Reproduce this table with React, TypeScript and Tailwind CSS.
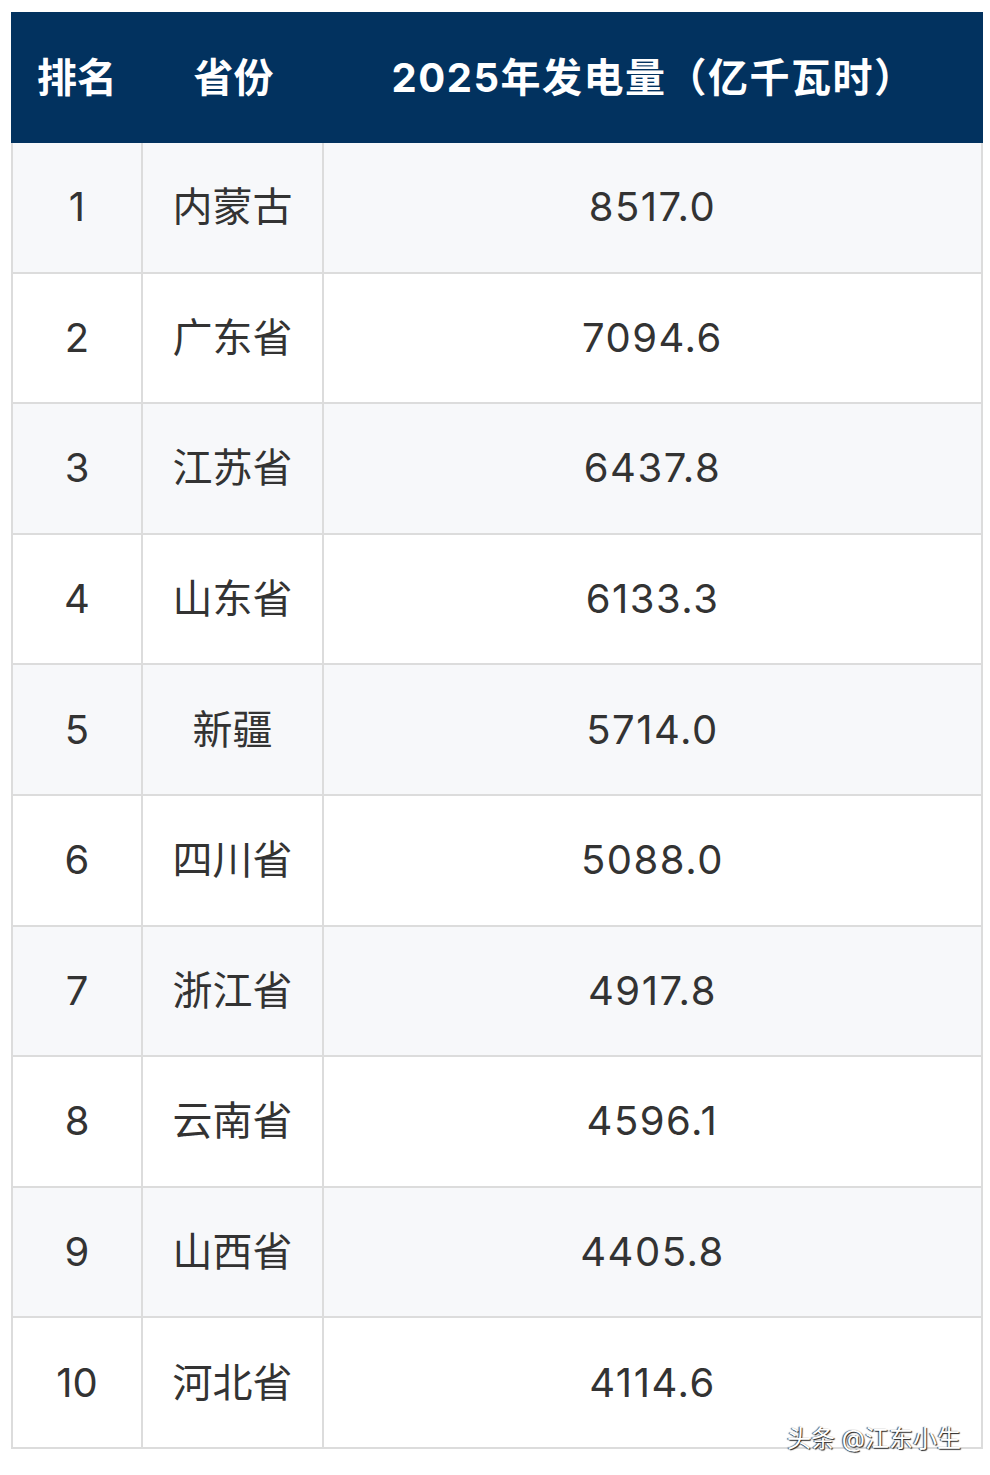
const rows: [string, string, string][] = [
  ["1", "内蒙古", "8517.0"],
  ["2", "广东省", "7094.6"],
  ["3", "江苏省", "6437.8"],
  ["4", "山东省", "6133.3"],
  ["5", "新疆", "5714.0"],
  ["6", "四川省", "5088.0"],
  ["7", "浙江省", "4917.8"],
  ["8", "云南省", "4596.1"],
  ["9", "山西省", "4405.8"],
  ["10", "河北省", "4114.6"],
];

const font = { fontFamily: 'Inter, "Noto Sans CJK SC", sans-serif' };

export default function App() {
  return (
    <div className="relative w-[990px] h-[1475px] bg-white" style={font}>
      <div className="pl-[11px] pt-[12px] w-[983px]">
        {/* header */}
        <div className="flex h-[131px] items-center bg-[#02325f] text-white text-[40px] font-bold">
          <div className="w-[132px] text-center">排名</div>
          <div className="w-[181px] text-center">省份</div>
          <div className="flex-1 text-center tracking-[1.5px]">2025年发电量（亿千瓦时）</div>
        </div>

        {rows.map(([rank, prov, val], i) => (
          <div
            key={rank}
            className={
              i % 2 === 0
                ? "flex h-[130.6px] border-x-2 border-b-2 border-[#dcdcdc] bg-[#f7f8fa] text-[#333333] text-[40px]"
                : "flex h-[130.6px] border-x-2 border-b-2 border-[#dcdcdc] bg-white text-[#333333] text-[40px]"
            }
          >
            <div className="w-[130px] flex items-center justify-center border-r-2 border-[#dcdcdc]">{rank}</div>
            <div className="w-[181px] flex items-center justify-center border-r-2 border-[#dcdcdc]">{prov}</div>
            <div className="flex-1 flex items-center justify-center tracking-[1.5px]">{val}</div>
          </div>
        ))}
      </div>

      {/* watermark */}
      <div
        className="absolute left-[787px] top-[1423px] text-[24px] leading-[32px] text-white"
        style={{ textShadow: "1px 1px 1px #222, -1px 0 1px #444" }}
      >
        头条 @江东小生
      </div>
    </div>
  );
}
